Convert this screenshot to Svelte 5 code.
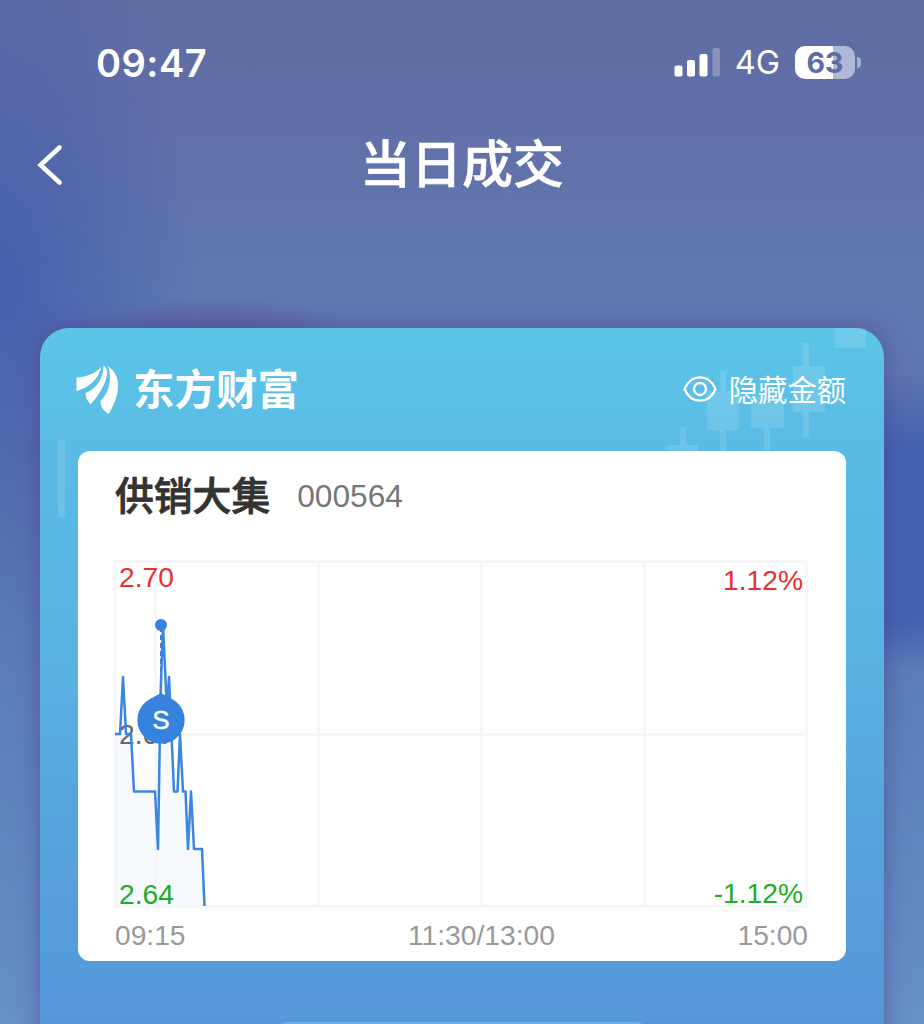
<script lang="ts">
  const stock = { name: '供销大集', code: '000564' };

  // plot area is 692 x 346
  const columns = [0.5, 40.5, 203.5, 366.5, 529.5, 691.5];
  const rows = [0.5, 173.5, 345.5];
  const points = [
    [0, 173], [5, 173], [8, 116], [11, 173], [16, 173], [19, 230.5],
    [40, 230.5], [43, 288], [45.5, 135], [48, 64], [52, 150], [54, 116],
    [59, 230.5], [62.5, 230.5], [65, 173], [68, 230.5], [70.5, 230.5],
    [73, 288], [76, 230.5], [79, 288], [87, 288], [89.5, 345]
  ];
  const line = points.map((p) => p.join(',')).join(' ');
  const area = `0,346 ${line} 90,346`;

  let hidden = $state(false);
</script>

<div class="page">
  <header class="status">
    <span class="time">09:47</span>
    <div class="status-right">
      <svg class="signal" width="46" height="30" viewBox="0 0 46 30">
        <rect x="0.5" y="18.5" width="8" height="11" rx="2" />
        <rect x="13" y="13" width="8" height="16.5" rx="2" />
        <rect x="25.5" y="7" width="8" height="22.5" rx="2" />
        <rect x="38.5" y="1" width="7.5" height="28.5" rx="2" opacity="0.25" />
      </svg>
      <span class="network">4G</span>
      <div class="battery">
        <div class="battery-body">63</div>
        <div class="battery-tip"></div>
      </div>
    </div>
  </header>

  <nav class="nav">
    <button class="back" aria-label="返回">
      <svg width="26" height="42" viewBox="0 0 26 42">
        <path d="M23.500 3.500 4.500 21l19 17.500" />
      </svg>
    </button>
    <h1>当日成交</h1>
  </nav>

  <main class="card">
    <svg class="candles" width="844" height="200" viewBox="40 328 844 200">
      <path d="M835 328h31v20h-31zM803 343h6v23h16v46h-16v25h-6v-25h-10v-46h10zM720 371h6v20h13v39h-13v22h-6v-22h-13v-39h13zM751 396h33v32h-14v24h-6v-24h-13zM680 427h6v18h12v7h-31v-7h13zM58 440h7v77h-7z" />
    </svg>

    <div class="card-head">
      <div class="brand">
        <svg width="44" height="50" viewBox="0 0 44 50">
          <path d="M.5 12.500C11 12 20 8 25.500 1.500C22.500 14 13 23 .5 26Z" />
          <path d="M27.500 .5C32.500 2 32 12 27.500 20.500C24 28 19 34.500 14.500 39.500C11.500 36 9.500 32.500 9.500 28C20 24 27.500 14 27.500 .5Z" />
          <path d="M32 1C38 5 42 12 42 20C42.500 30 37 42 32.500 49C28 46 24.500 42.500 24.500 36C33 28 36.500 14 32 1Z" />
        </svg>
        <span>东方财富</span>
      </div>
      <button class="toggle" onclick={() => (hidden = !hidden)}>
        <svg width="34" height="28" viewBox="0 0 34 28">
          <path d="M1.500 14C8 -1.500 26 -1.500 32.500 14C26 29.500 8 29.500 1.500 14Z" />
          <circle cx="17" cy="14" r="6" />
        </svg>
        <span>{hidden ? '显示金额' : '隐藏金额'}</span>
      </button>
    </div>

    <section class="panel">
      <div class="stock">
        <h2>{stock.name}</h2>
        <span>{stock.code}</span>
      </div>

      <svg class="chart" width="692" height="347" viewBox="0 0 692 347">
        <polygon class="area" points={area} />
        {#each columns as x}
          <line class="grid" x1={x} x2={x} y1="0" y2="346" />
        {/each}
        {#each rows as y}
          <line class="grid" x1="0" x2="692" y1={y} y2={y} />
        {/each}
        <text class="up" x="4" y="25.500">2.70</text>
        <text class="mid" x="4" y="183">2.67</text>
        <text class="down" x="4" y="343">2.64</text>
        <text class="up" x="688" y="29" text-anchor="end">1.12%</text>
        <text class="down" x="688" y="342" text-anchor="end">-1.12%</text>

        <polyline class="price" points={line} />
        <line class="lead" x1="46" x2="46" y1="66" y2="134" />
        <circle class="mark" cx="46" cy="64" r="6" />
        <path class="mark" d="M46 132l11 6a23.700 23.700 0 1 1-22 0z" />
        <text class="side" x="46" y="168" text-anchor="middle">S</text>
      </svg>

      <div class="axis">
        <span>09:15</span>
        <span>11:30/13:00</span>
        <span>15:00</span>
      </div>
    </section>

    <div class="next"></div>
  </main>
</div>

<style>
  :global(body) {
    margin: 0;
  }

  .page {
    width: 924px;
    height: 1024px;
    overflow: hidden;
    box-sizing: border-box;
    font-family: 'Liberation Sans', 'Noto Sans CJK SC', sans-serif;
    color: #fff;
    background:
      radial-gradient(ellipse 130px 36px at 220px 334px, rgba(91, 74, 150, 0.65), transparent),
      linear-gradient(180deg, transparent 370px, #4560b0 450px, #4560b0 620px, transparent 670px) right / 60px 100% no-repeat,
      radial-gradient(ellipse 200px 360px at 0 280px, rgba(62, 86, 172, 0.65) 10%, transparent),
      linear-gradient(180deg, #5e6ca3 0, #6270a9 130px, #6078b0 290px, #5f74b0 450px, #5a7ab6 640px, #6592c6 1024px);
  }

  button {
    padding: 0;
    border: 0;
    background: none;
    color: inherit;
    font: inherit;
    cursor: pointer;
  }

  h1,
  h2 {
    margin: 0;
    font-weight: 500;
  }

  svg {
    display: block;
    flex: none;
  }

  .status {
    display: flex;
    align-items: center;
    justify-content: space-between;
    height: 124px;
    padding: 0 63px 0 96px;
    box-sizing: border-box;
  }

  .time {
    padding-top: 1px;
    font: 600 38px/1 Inter, sans-serif;
    letter-spacing: 0.5px;
  }

  .status-right {
    display: flex;
    align-items: center;
  }

  .signal {
    fill: #fff;
  }

  .network {
    margin: 2px 15px 0 15px;
    font: 400 32.5px/1 Inter, sans-serif;
  }

  .battery {
    display: flex;
    align-items: center;
    gap: 2px;
  }

  .battery-body {
    width: 60px;
    height: 33px;
    border-radius: 10px;
    background: linear-gradient(90deg, #fff 63%, #b0b8d7 63%);
    color: #5d6ca6;
    font: 700 28.5px/33px Inter, sans-serif;
    text-align: center;
  }

  .battery-tip {
    width: 4px;
    height: 11px;
    border-radius: 0 5px 5px 0;
    background: #a4aed1;
  }

  .nav {
    display: grid;
    grid-template-columns: 64px 1fr 64px;
    align-items: center;
    height: 80px;
    padding-left: 36px;
    padding-right: 36px;
  }

  .back path {
    fill: none;
    stroke: #fff;
    stroke-width: 4.5;
    stroke-linecap: round;
  }

  .nav h1 {
    padding-top: 2px;
    font-size: 51px;
    line-height: 80px;
    text-align: center;
    -webkit-text-stroke: 0.6px #fff;
  }

  .card {
    position: relative;
    height: 760px;
    margin: 122px 40px 0;
    padding: 0 38px;
    border-radius: 29px;
    background: linear-gradient(180deg, #5bc5e7 0, #5abce5 110px, #59b3e2 320px, #569fdc 560px, #5598da 700px);
    box-shadow: 0 0 22px rgba(77, 62, 143, 0.6);
  }

  .nav + .card {
    margin-top: 124px;
  }

  .candles {
    position: absolute;
    top: 0;
    left: 0;
    fill: #fff;
    opacity: 0.12;
  }

  .card-head {
    position: relative;
    display: flex;
    align-items: center;
    justify-content: space-between;
    height: 123px;
  }

  .brand {
    display: flex;
    align-items: center;
    gap: 13px;
    margin-left: -2px;
    font: 700 41.5px/1 'Noto Sans CJK SC', sans-serif;
  }

  .brand span {
    padding-bottom: 4px;
  }

  .brand svg {
    fill: #fff;
  }

  .toggle {
    display: flex;
    align-items: center;
    gap: 12px;
    font: 400 29.3px/1 'Noto Sans CJK SC', sans-serif;
  }

  .toggle span {
    padding-bottom: 2px;
  }

  .toggle svg {
    fill: none;
    stroke: #fff;
    stroke-width: 2.4;
  }

  .panel {
    position: relative;
    height: 510px;
    padding: 0 38px 0 37px;
    box-sizing: border-box;
    border-radius: 12px;
    background: #fff;
  }

  .stock {
    display: flex;
    align-items: center;
    gap: 27px;
    height: 110px;
    padding-bottom: 18px;
    box-sizing: border-box;
  }

  .stock h2 {
    padding-top: 1px;
    color: #333;
    font-size: 38.8px;
    line-height: 1;
    -webkit-text-stroke: 0.8px #333;
  }

  .stock span {
    padding-bottom: 1px;
    color: #777;
    font-size: 31.7px;
  }

  .chart {
    overflow: visible;
    font-size: 28.2px;
  }

  .grid {
    stroke: #f4f4f5;
    stroke-width: 2;
  }

  .area {
    fill: #f6fafe;
  }

  .price {
    fill: none;
    stroke: #3b86df;
    stroke-width: 2.5;
    stroke-linejoin: round;
  }

  .lead {
    stroke: #3682df;
    stroke-width: 2;
    stroke-dasharray: 5 3;
  }

  .mark {
    fill: #3682df;
  }

  .up {
    fill: #e93030;
  }

  .mid {
    fill: #666;
  }

  .down {
    fill: #22ac22;
  }

  .side {
    fill: #fff;
    stroke: #fff;
    stroke-width: 0.5;
    font-size: 26px;
  }

  .axis {
    display: grid;
    grid-template-columns: 293px 1fr auto;
    color: #999;
    font-size: 28.2px;
    line-height: 54px;
  }

  .next {
    width: 366px;
    height: 60px;
    margin: 61px auto 0;
    border-radius: 8px;
    background: #68b2ea;
  }
</style>
